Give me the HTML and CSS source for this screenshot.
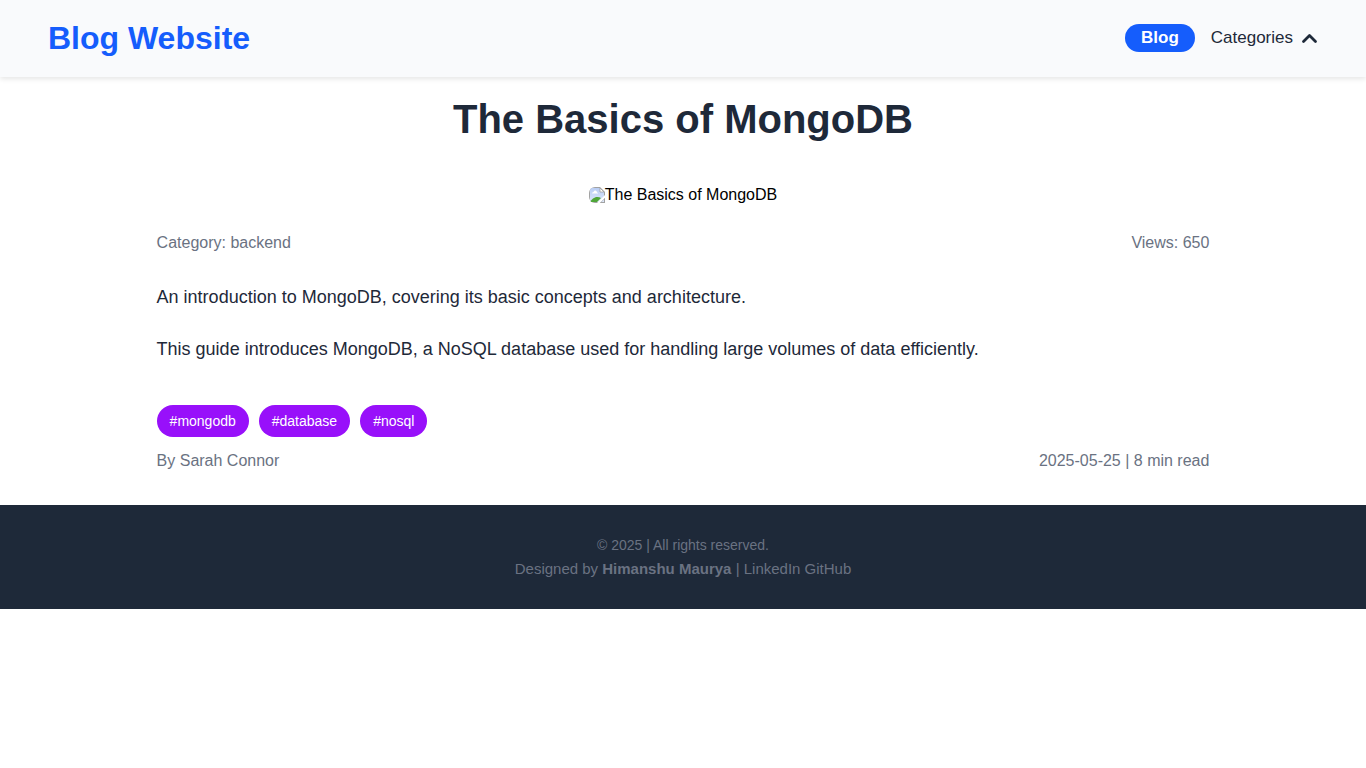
FILE: index.html
```html
<!DOCTYPE html>
<html lang="en">
<head>
<meta charset="utf-8">
<meta name="viewport" content="width=device-width, initial-scale=1">
<title>The Basics of MongoDB</title>
<link rel="stylesheet" href="styles.css">
</head>
<body>
<header class="header">
  <div class="logo">Blog Website</div>
  <nav class="nav">
    <a class="nav-blog" href="#blog">Blog</a>
    <button class="nav-categories" type="button" aria-expanded="false">Categories
      <svg class="chevron" viewBox="0 0 17 17" aria-hidden="true"><path fill="none" stroke="currentColor" stroke-width="2.800" stroke-linecap="round" stroke-linejoin="round" d="M2.500 11.500L8.500 5.500L14.500 11.500"/></svg>
    </button>
  </nav>
</header>
<main class="article">
  <h1 class="title">The Basics of MongoDB</h1>
  <div class="cover">
    <svg class="cover-icon" viewBox="0 0 16 16" aria-hidden="true">
      <defs><linearGradient id="sky" x1="0" y1="0" x2="0" y2="1"><stop offset="0" stop-color="#b9cdf4"/><stop offset="1" stop-color="#dce7fb"/></linearGradient></defs>
      <path d="M0 0H11L16 5V16H0Z" fill="#a2a2a2"/>
      <path d="M1 1H11V5H15V15H1Z" fill="url(#sky)"/>
      <path d="M3 6.500Q3 5 4.500 5Q5 3 6.500 3.500Q8 4 8 5.500Q9 5.500 9 6.500Z" fill="#fff"/>
      <path d="M1 15V14.500Q4 10.500 7 10Q10 9.500 12 11L8 15Z" fill="#4fa638"/>
      <path d="M11 1V5H15Z" fill="#fff" stroke="#999" stroke-width=".7"/>
      <path d="M8 16L16 8V11L11 16Z" fill="#fff"/>
      <path d="M11 16L16 11V16Z" fill="#a2a2a2"/>
      <path d="M12.500 15L15 12.500V15Z" fill="#dce7fb"/>
    </svg><span>The Basics of MongoDB</span>
  </div>
  <div class="meta">
    <span>Category: backend</span>
    <span>Views: 650</span>
  </div>
  <div class="content">
    <p>An introduction to MongoDB, covering its basic concepts and architecture.</p>
    <p>This guide introduces MongoDB, a NoSQL database used for handling large volumes of data efficiently.</p>
  </div>
  <div class="tags">
    <span class="tag">#mongodb</span>
    <span class="tag">#database</span>
    <span class="tag">#nosql</span>
  </div>
  <div class="meta">
    <span>By Sarah Connor</span>
    <span>2025-05-25 | 8 min read</span>
  </div>
</main>
<footer class="footer">
  <p class="copyright">© 2025 | All rights reserved.</p>
  <p class="credits">Designed by <strong>Himanshu Maurya</strong> | <a href="#linkedin">LinkedIn</a> <a href="#github">GitHub</a></p>
</footer>
</body>
</html>
```
FILE: styles.css
```css
* {
  box-sizing: border-box;
  margin: 0;
  padding: 0;
}

body {
  background: #fff;
  color: #000;
  font: 16px/24px "Liberation Sans", Arial, sans-serif;
}

a {
  color: inherit;
  text-decoration: none;
}

.header {
  display: flex;
  align-items: center;
  justify-content: space-between;
  padding: 16px 48px 17px;
  background: #f9fafc;
  box-shadow: 0 2px 5px rgba(0, 0, 0, 0.1);
}

.logo {
  color: #155dfc;
  font-size: 32px;
  font-weight: 700;
  line-height: 44px;
}

.nav {
  display: flex;
  align-items: center;
  gap: 16px;
}

.nav-blog {
  padding: 0 16px;
  border-radius: 16px;
  background: #155dfc;
  color: #fff;
  font-size: 17px;
  font-weight: 700;
  line-height: 28px;
}

.nav-categories {
  display: flex;
  align-items: center;
  gap: 8px;
  border: 0;
  background: none;
  color: #1e2939;
  font: inherit;
  font-size: 17px;
  cursor: pointer;
}

.chevron {
  width: 17px;
  height: 17px;
}

.article {
  width: 80%;
  margin: 0 auto;
  padding: 16px 20px 32px;
}

.title {
  margin-bottom: 40px;
  color: #1e2939;
  font-size: 40px;
  line-height: 52px;
  text-align: center;
}

.cover {
  display: flex;
  justify-content: center;
  align-items: center;
  margin-bottom: 26px;
  line-height: 20px;
}

.cover-icon {
  width: 16px;
  height: 16px;
  border-radius: 6px 0 0 6px;
}

.meta {
  display: flex;
  justify-content: space-between;
  color: #6a7282;
}

.content {
  display: grid;
  gap: 20px;
  margin: 26px 0 40px;
  color: #1e2939;
  font-size: 18px;
  line-height: 32px;
}

.tags {
  display: flex;
  flex-wrap: wrap;
  gap: 10px;
  margin-bottom: 12px;
}

.tag {
  padding: 0 13px;
  border-radius: 16px;
  background: #9810fa;
  color: #fff;
  font-size: 14px;
  line-height: 32px;
}

.footer {
  padding: 28px 16px;
  background: #1e2939;
  color: #6a7282;
  text-align: center;
}

.copyright {
  font-size: 14px;
}

.credits {
  font-size: 15px;
}
```
